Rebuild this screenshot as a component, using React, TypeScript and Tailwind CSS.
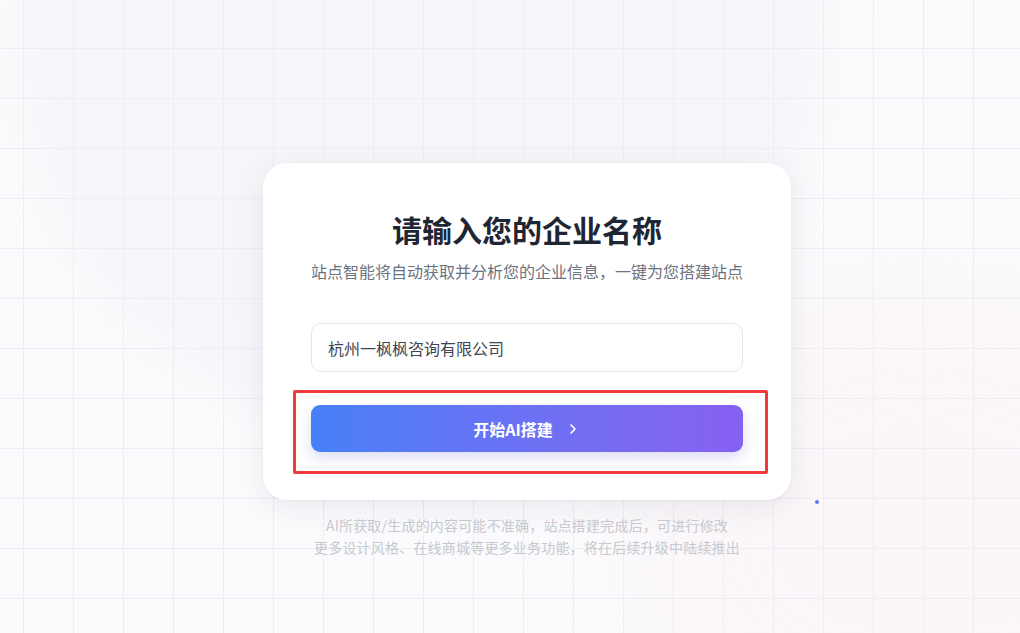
import { ChevronRight } from "lucide-react";

const cjk = { fontFamily: '"Noto Sans CJK SC", "Noto Sans", sans-serif' };

function Background() {
  return (
    <div className="pointer-events-none absolute inset-0 overflow-hidden">
      <div className="absolute -top-[380px] left-[20px] h-[820px] w-[800px] rounded-full bg-[#f3f4f8] opacity-70 blur-xl" />
      <div className="absolute left-[620px] top-[280px] h-[500px] w-[600px] rounded-full bg-[#fbf4f7] opacity-70 blur-3xl" />
      <div className="absolute inset-0 bg-[linear-gradient(to_right,#eceef3_1px,transparent_1px),linear-gradient(to_bottom,#eceef3_1px,transparent_1px)] bg-[size:50px_50px] bg-[position:23px_48px]" />
      <div className="absolute left-[815px] top-[500px] h-[4px] w-[4px] rounded-full bg-[#5b77f2]" />
    </div>
  );
}

function Card() {
  return (
    <div className="w-[528px] rounded-[24px] bg-white px-12 pb-12 pt-12 shadow-[0_8px_30px_rgba(30,41,80,0.08),0_1px_3px_rgba(30,41,80,0.04)]">
      <h1 className="text-center text-[30px] font-bold leading-[36px] text-[#1f2633]">
        请输入您的企业名称
      </h1>
      <p className="mt-3 text-center text-base leading-6 text-[#6b7280]">
        站点智能将自动获取并分析您的企业信息，一键为您搭建站点
      </p>
      <div className="mt-10 flex h-[49px] items-center rounded-[10px] border border-[#e4e6eb] bg-white px-4 text-base text-[#3f4653]">
        杭州一枫枫咨询有限公司
      </div>
      <div className="relative mt-[33px]">
        <button className="flex h-[47px] w-full items-center justify-center gap-3 rounded-[9px] bg-gradient-to-r from-[#4580f6] to-[#8660f2] text-base font-bold text-white shadow-[0_6px_14px_rgba(90,100,200,0.22)]">
          <span>开始AI搭建</span>
          <ChevronRight size={16} strokeWidth={2.6} />
        </button>
        <div className="pointer-events-none absolute -bottom-[22px] -left-[18px] -right-[25px] -top-[15px] rounded-[2px] border-[3px] border-[#f23a3c]" />
      </div>
    </div>
  );
}

export default function App() {
  return (
    <div className="relative h-[633px] w-full overflow-hidden bg-[#fbfbfd]" style={cjk}>
      <Background />
      <div className="relative flex flex-col items-center pl-[34px] pt-[163px]">
        <Card />
        <div className="mt-[14px] text-center text-sm leading-[22px] tracking-[0.2px] text-[#c6c9cf]">
          <p>AI所获取/生成的内容可能不准确，站点搭建完成后，可进行修改</p>
          <p>更多设计风格、在线商城等更多业务功能，将在后续升级中陆续推出</p>
        </div>
      </div>
    </div>
  );
}
